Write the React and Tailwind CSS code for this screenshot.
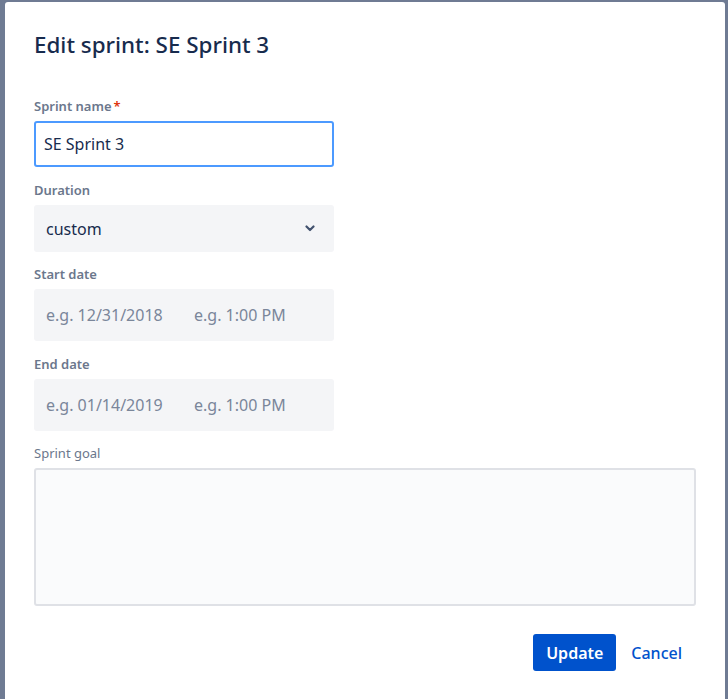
import React from 'react';

const Label = ({ children, required, light }) => (
  <div
    className={`h-[16px] leading-[16px] text-[13px] text-[#6b778c] ${light ? 'font-normal' : 'font-semibold'}`}
  >
    {children}
    {required && <span className="ml-[2px] text-[#de350b]">*</span>}
  </div>
);

const DateField = ({ date }) => (
  <div className="mt-[7px] flex h-[52px] w-[300px] items-center rounded-[3px] bg-[#f4f5f7] pl-[12px] text-[16px] text-[#7a869a]">
    <span className="w-[148px]">{date}</span>
    <span>e.g. 1:00 PM</span>
  </div>
);

export default function App() {
  return (
    <div className="h-[699px] w-[728px] overflow-hidden bg-[#6f7b93] pl-[5px] pt-[2px] font-['Noto_Sans',sans-serif]">
      <div className="h-[720px] w-[720px] rounded-[3px] bg-white px-[29px] pt-[29px]">
        <h1 className="h-[28px] text-[22.4px] leading-[28px] font-medium text-[#172b4d]">
          Edit sprint: SE Sprint 3
        </h1>

        <div className="mt-[39px]">
          <Label required>Sprint name</Label>
          <div className="mt-[7px] flex h-[46px] w-[300px] items-center rounded-[3px] border-2 border-[#4c9aff] bg-white pl-[8px] text-[16px] text-[#172b4d]">
            SE Sprint 3
          </div>
        </div>

        <div className="mt-[15px]">
          <Label>Duration</Label>
          <div className="mt-[7px] flex h-[47px] w-[300px] items-center justify-between rounded-[3px] bg-[#f4f5f7] pl-[12px] pr-[19px] text-[16px] text-[#172b4d]">
            <span>custom</span>
            <svg width="10" height="7" viewBox="0 0 10 7">
              <path d="M1.5 1.5 L5 5 L8.5 1.5" fill="none" stroke="#42526e" strokeWidth="2.2" strokeLinecap="round" strokeLinejoin="round" />
            </svg>
          </div>
        </div>

        <div className="mt-[14px]">
          <Label>Start date</Label>
          <DateField date="e.g. 12/31/2018" />
        </div>

        <div className="mt-[15px]">
          <Label>End date</Label>
          <DateField date="e.g. 01/14/2019" />
        </div>

        <div className="mt-[14px]">
          <Label light>Sprint goal</Label>
          <div className="mt-[7px] h-[138px] w-[662px] rounded-[3px] border-2 border-[#dfe1e6] bg-[#fafbfc]" />
        </div>

        <div className="mt-[28px] flex w-[662px] items-center justify-end gap-[15px] pr-[14px]">
          <button className="h-[37px] w-[83px] rounded-[3px] bg-[#0052cc] text-[16px] font-semibold text-white">
            Update
          </button>
          <button className="text-[16px] font-medium text-[#0052cc]">Cancel</button>
        </div>
      </div>
    </div>
  );
}
